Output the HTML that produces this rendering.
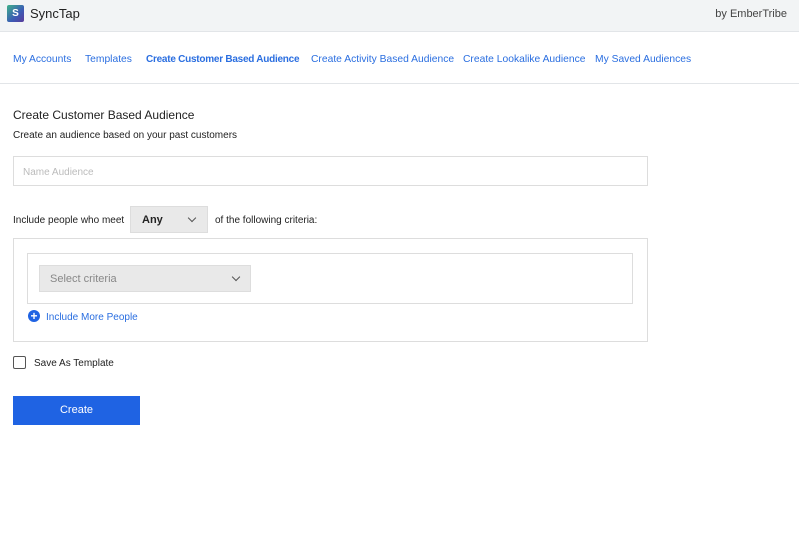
<!DOCTYPE html>
<html><head><meta charset="utf-8"><style>
*{margin:0;padding:0;box-sizing:border-box}
body{width:799px;height:552px;background:#fff;font-family:"Liberation Sans",sans-serif;position:relative;overflow:hidden;color:#222}
.hdr{position:absolute;left:0;top:0;width:799px;height:32px;background:#f2f4f5;border-bottom:1px solid #e2e5e8}
.logo{position:absolute;left:7px;top:5px;width:17px;height:17px;background:linear-gradient(135deg,#3fb28a,#3b5bb5 60%,#5a3b9a);border-radius:2px;color:#fff;font-size:10px;font-weight:bold;text-align:center;line-height:17px}
.brand{position:absolute;left:30px;top:6px;font-size:13px;color:#222}
.by{position:absolute;right:12px;top:8px;font-size:11px;color:#444}
.nav{position:absolute;top:54px;font-size:10.3px;color:#2a6ee0;white-space:nowrap}
.line{position:absolute;left:0;top:83px;width:799px;height:1px;background:#e2e5e8}
.t{position:absolute;font-size:12px;white-space:nowrap}
.box{position:absolute;border:1px solid #ddd}
.sel{position:absolute;background:#e9e9e9;border:1px solid #ddd;font-size:11px}
.chev{position:absolute;width:6px;height:6px;border-right:1.3px solid #555;border-bottom:1.3px solid #555;transform:rotate(45deg)}
</style></head><body>
<div class="hdr"><div class="logo">S</div><div class="brand">SyncTap</div><div class="by">by EmberTribe</div></div>
<div class="nav" style="left:13px">My Accounts</div>
<div class="nav" style="left:85px">Templates</div>
<div class="nav" style="left:146px;font-weight:bold;font-size:10px;letter-spacing:-0.25px">Create Customer Based Audience</div>
<div class="nav" style="left:311px">Create Activity Based Audience</div>
<div class="nav" style="left:463px">Create Lookalike Audience</div>
<div class="nav" style="left:595px">My Saved Audiences</div>
<div class="line"></div>
<div class="t" style="left:13px;top:108px;font-size:12px;color:#222">Create Customer Based Audience</div>
<div class="t" style="left:13px;top:130px;font-size:10px;color:#222">Create an audience based on your past customers</div>
<div class="box" style="left:13px;top:156px;width:635px;height:30px"><span style="position:absolute;left:9px;top:10px;font-size:10px;color:#bbb">Name Audience</span></div>
<div class="t" style="left:13px;top:215px;font-size:10px">Include people who meet</div>
<div class="sel" style="left:130px;top:206px;width:78px;height:27px"><span style="position:absolute;left:11px;top:7px;font-weight:bold;color:#222">Any</span><div class="chev" style="left:58px;top:8px"></div></div>
<div class="t" style="left:215px;top:215px;font-size:10px">of the following criteria:</div>
<div class="box" style="left:13px;top:238px;width:635px;height:104px"></div>
<div class="box" style="left:27px;top:253px;width:606px;height:51px"></div>
<div class="sel" style="left:39px;top:265px;width:212px;height:27px"><span style="position:absolute;left:10px;top:7px;color:#888">Select criteria</span><div class="chev" style="left:193px;top:8px"></div></div>
<div style="position:absolute;left:28px;top:310px;width:12px;height:12px;border-radius:50%;background:#1f63e3;color:#fff;font-size:12px;line-height:12px;text-align:center;font-weight:bold">+</div>
<div class="t" style="left:46px;top:312px;font-size:10px;color:#2a6ee0">Include More People</div>
<div style="position:absolute;left:13px;top:356px;width:13px;height:13px;border:1.5px solid #555;border-radius:2px"></div>
<div class="t" style="left:34px;top:358px;font-size:10px">Save As Template</div>
<div style="position:absolute;left:13px;top:396px;width:127px;height:29px;background:#1f63e3;color:#fff;font-size:11px;text-align:center;line-height:29px;font-weight:500">Create</div>
</body></html>
